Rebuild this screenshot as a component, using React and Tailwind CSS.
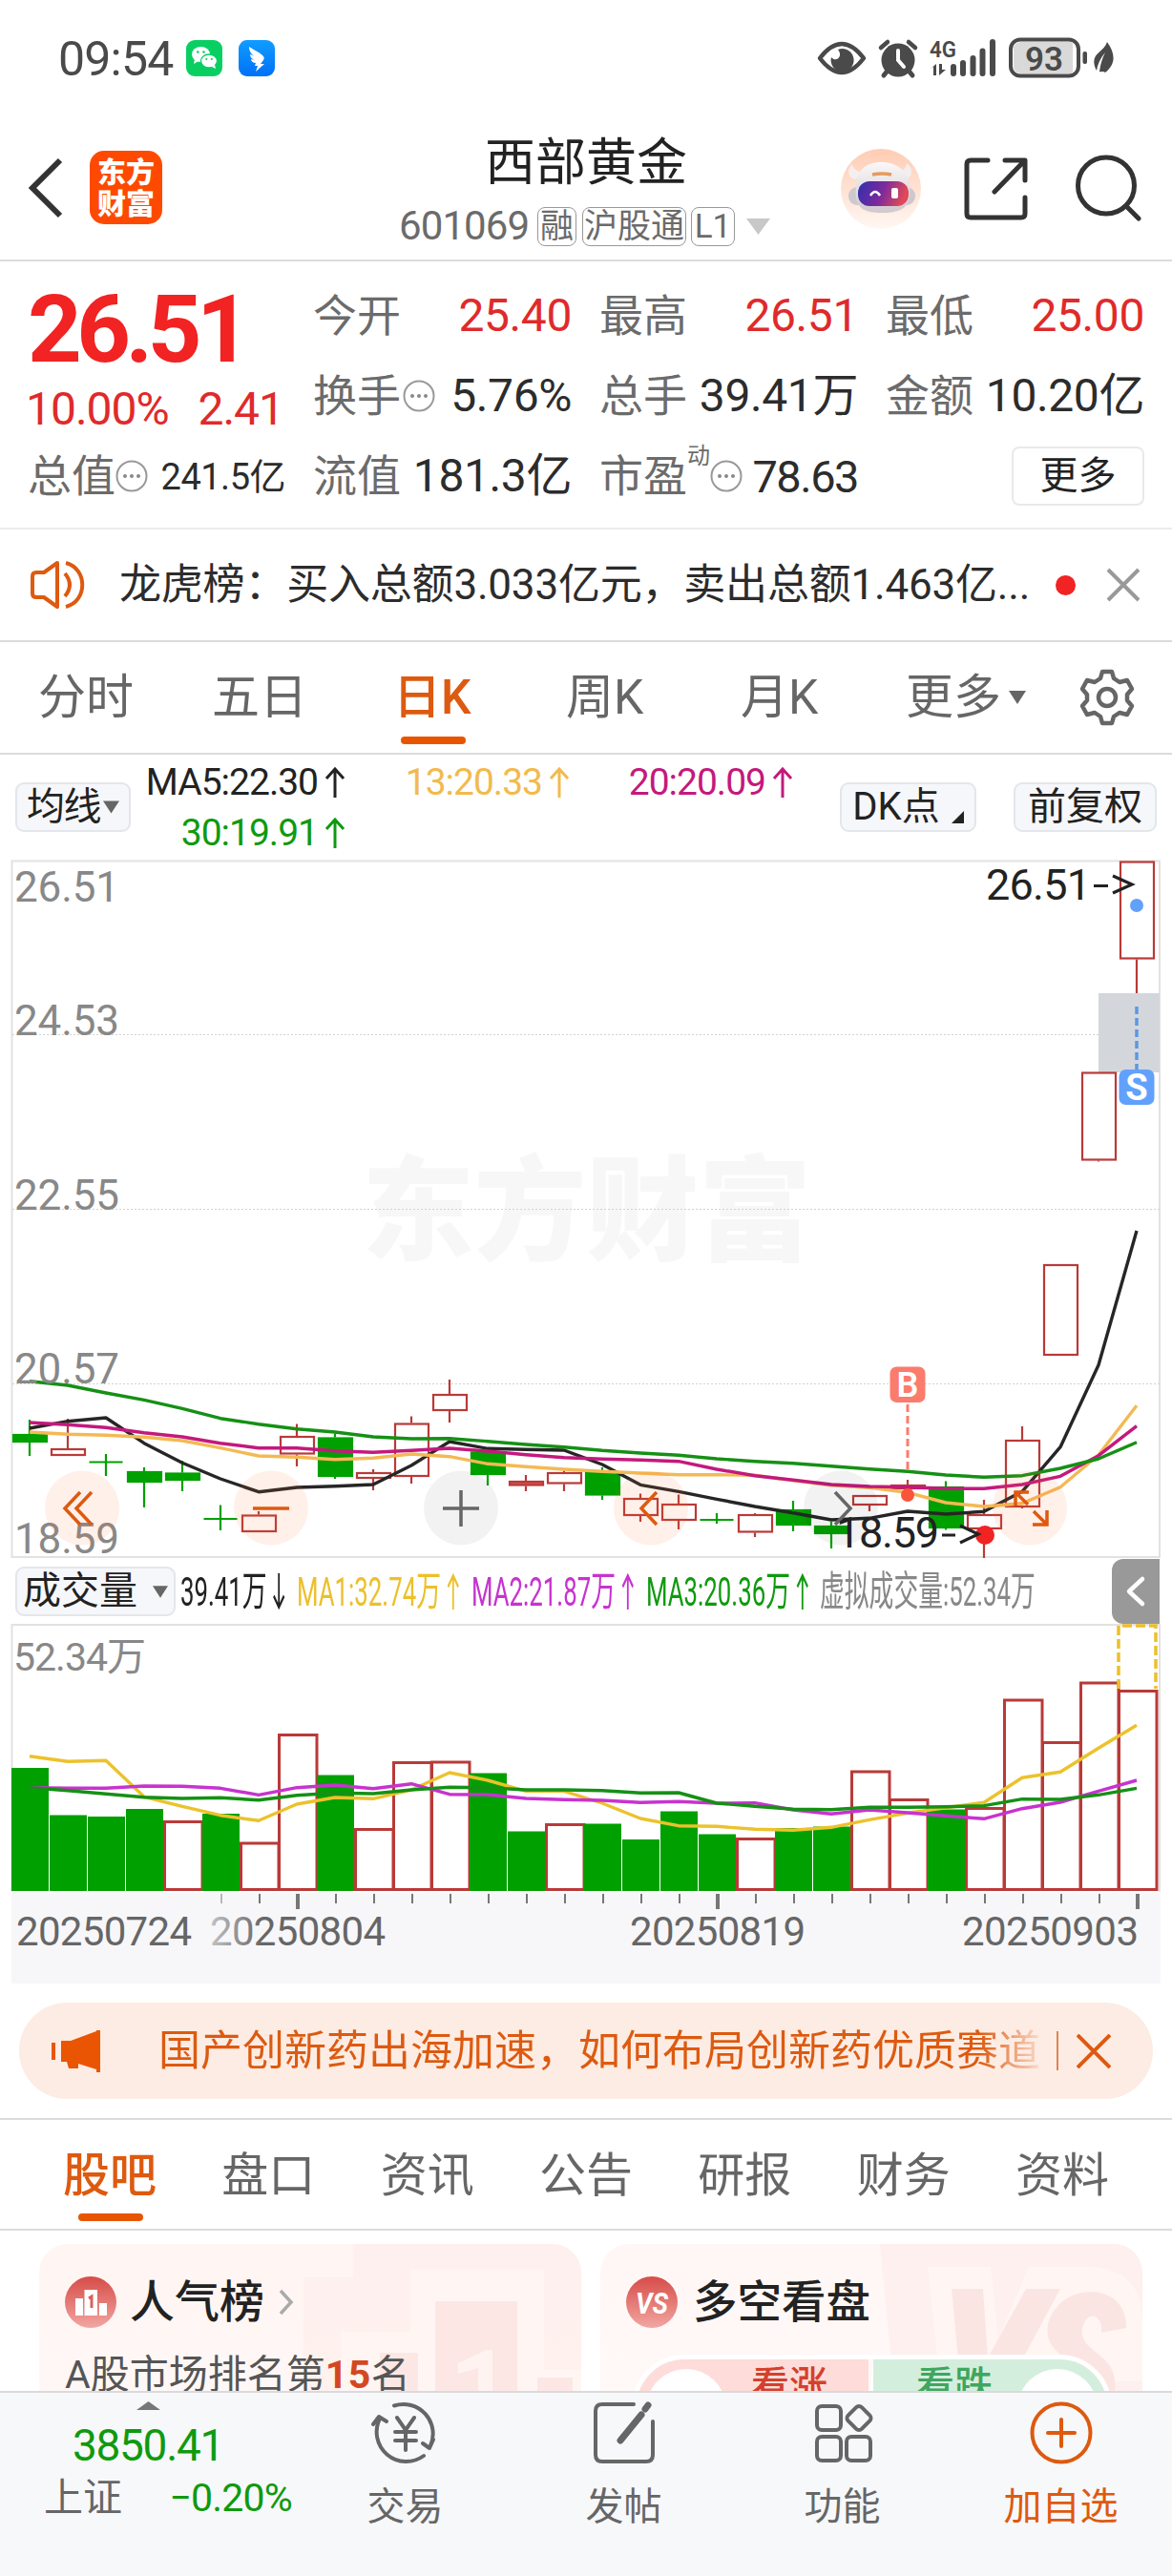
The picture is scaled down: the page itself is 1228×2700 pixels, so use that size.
import React from "react";
import clsx from "clsx";

const RED = "#b93a38";
const GREEN = "#00a000";

const STEP = 40;
const cx = (i) => 31 + i * STEP;
const toPoints = (ys) => ys.map((y, i) => `${cx(i)},${y}`).join(" ");

// [type, bodyTop, bodyBottom, wickTop, wickBottom]
const candles = [
  ["g", 1503, 1512, 1488, 1526],
  ["r", 1518, 1526, 1487, 1526],
  ["x", 1532.5, 1532.5, 1524, 1547],
  ["g", 1542, 1554, 1538, 1580],
  ["g", 1543.5, 1552, 1531, 1563],
  ["x", 1592, 1592, 1577.5, 1604],
  ["r", 1587.5, 1606, 1584, 1606],
  ["r", 1505, 1524.5, 1492.5, 1537],
  ["g", 1506.5, 1548, 1502.5, 1550],
  ["r", 1543, 1550, 1540, 1562],
  ["r", 1491.5, 1548, 1484.5, 1555],
  ["r", 1461, 1479, 1446, 1491],
  ["g", 1521.5, 1546, 1520, 1557],
  ["f", 1552, 1557.5, 1546, 1563],
  ["r", 1543, 1555.5, 1541.5, 1563],
  ["g", 1543, 1567.5, 1538, 1572],
  ["r", 1570, 1589, 1565.5, 1595],
  ["r", 1576, 1594, 1566.5, 1603],
  ["x", 1593, 1593, 1586, 1597],
  ["r", 1587, 1606.5, 1586, 1611],
  ["g", 1582, 1599, 1573, 1605],
  ["g", 1599, 1608, 1595, 1623],
  ["r", 1567, 1578, 1567, 1584],
  ["f", 1556, 1561, 1551, 1573],
  ["g", 1558, 1602, 1552.5, 1603.5],
  ["r", 1587, 1603, 1572, 1633],
  ["r", 1509, 1580, 1495, 1581],
  ["r", 1325, 1421, 1325, 1421],
  ["r", 1123.5, 1216.5, 1123.5, 1217.5],
  ["r", 902.5, 1005.5, 902.5, 1041],
];

const ma5 = [1497, 1489.7, 1486, 1512.7, 1533.3, 1550, 1563.7, 1559, 1557.7, 1556, 1536, 1511, 1518.3, 1519.3, 1520, 1535, 1556.3, 1563.3, 1571.3, 1579, 1585.7, 1593, 1591.3, 1584, 1587, 1584.3, 1563.3, 1516.7, 1430.7, 1290];
const ma13 = [1501, 1503.3, 1504.3, 1506.3, 1510, 1517.7, 1526, 1527.3, 1529.7, 1528.3, 1524, 1526.7, 1534.3, 1537.3, 1540, 1542.3, 1544, 1545.7, 1545.7, 1546.3, 1551.7, 1556.7, 1559.3, 1564.3, 1575, 1579, 1575.7, 1558.7, 1525, 1473.3];
const ma20 = [1491, 1493.3, 1496.3, 1501.7, 1506, 1512.7, 1517.7, 1517.7, 1520.7, 1522.3, 1520.3, 1518, 1521, 1524.7, 1527.7, 1529.3, 1530.3, 1531.7, 1540, 1546.7, 1551.3, 1556, 1558, 1558.7, 1560.3, 1560.3, 1556, 1547.3, 1525.7, 1494.7];
const ma30 = [1447.7, 1452, 1460, 1467.3, 1476.3, 1486.7, 1492.7, 1497.7, 1501, 1506, 1508, 1507.7, 1510.7, 1514, 1516.7, 1520.3, 1523, 1525.3, 1529, 1531.7, 1533.7, 1536.7, 1539.7, 1542.3, 1546, 1548.3, 1546.7, 1539, 1529, 1511.7];

const volumes = [
  ["g", 1853], ["g", 1902.5], ["g", 1904], ["g", 1896], ["r", 1908], ["g", 1901], ["r", 1930.5], ["r", 1817], ["g", 1860.5], ["r", 1916],
  ["r", 1846], ["r", 1845.5], ["g", 1858.5], ["g", 1919.5], ["r", 1911], ["g", 1911.5], ["g", 1928], ["g", 1898.5], ["g", 1922.5], ["r", 1926],
  ["g", 1916], ["g", 1914.5], ["r", 1855.5], ["r", 1885], ["g", 1896.5], ["r", 1894], ["r", 1780.5], ["r", 1825], ["r", 1762.5], ["r", 1771],
];
const vma1 = [1840.7, 1846.3, 1845.3, 1883.3, 1893.3, 1902.7, 1908.3, 1891, 1884, 1885.3, 1876, 1858, 1866, 1877.3, 1877.3, 1890, 1906, 1913.7, 1914.3, 1917.3, 1918.3, 1915.3, 1907.3, 1900.3, 1894.7, 1889.3, 1863.3, 1857.3, 1832.3, 1808.3];
const vma2 = [1873.7, 1874.3, 1874.3, 1872, 1872.3, 1874.3, 1881.3, 1873.7, 1871, 1874.7, 1869.7, 1880.7, 1881, 1885, 1886.3, 1887, 1889.3, 1888.3, 1890, 1889.7, 1897, 1901.3, 1897, 1900, 1903.3, 1906.3, 1895.7, 1889, 1877.3, 1866];
const vma3 = [1873.7, 1876.7, 1880.3, 1883.7, 1885, 1884.3, 1886.7, 1881.7, 1879.3, 1880, 1876, 1873.3, 1873.7, 1876, 1876, 1876.7, 1879.3, 1879, 1890, 1893.3, 1896.3, 1896.7, 1894.3, 1894.3, 1893.7, 1892.7, 1885.7, 1886, 1881.3, 1874.3];

const StatusBar = () => (
  <div className="flex h-[122px] items-start justify-between pl-[61px] pr-[61px] pt-[38px] text-[#4a4a4a]">
    <div className="flex h-[46px] items-center">
      <span className="w-[134px] pt-[2px] text-[50px] leading-none tracking-[-0.8px]">09:54</span>
      <svg className="h-[38px] w-[38px]" viewBox="0 0 38 38">
        <rect width="38" height="38" rx="9" fill="#09cf63" />
        <ellipse cx="15.500" cy="15" rx="9.500" ry="8" fill="#fff" />
        <path d="M9 20l-1 5 5-3z" fill="#fff" />
        <ellipse cx="24" cy="22" rx="8.500" ry="7" fill="#fff" stroke="#09cf63" strokeWidth="1.300" />
        <path d="M27 28l4 2-1-4z" fill="#fff" />
        <g fill="#09cf63">
          <circle cx="12.300" cy="12.500" r="1.300" />
          <circle cx="18.500" cy="12.500" r="1.300" />
          <circle cx="21.300" cy="20" r="1.100" />
          <circle cx="26.800" cy="20" r="1.100" />
        </g>
      </svg>
      <svg className="ml-[17px] h-[38px] w-[38px]" viewBox="0 0 38 38">
        <defs>
          <linearGradient id="ding" x1="0" y1="0" x2="0" y2="1">
            <stop offset="0" stopColor="#109dff" />
            <stop offset="1" stopColor="#0070f8" />
          </linearGradient>
        </defs>
        <rect width="38" height="38" rx="9" fill="url(#ding)" />
        <path d="M11 7c4 3 10 5 14 9 2 2 2 3 1 5l-3 4h4l-9 8 2-6h-3l1-3c-3 0-5-2-5-4l4 1c-3-1-5-3-5-6l5 2c-4-2-6-6-6-10z" fill="#fff" />
      </svg>
    </div>
    <svg className="h-[46px] w-[312px]" viewBox="855 38 312 46" fill="#4a4a4a">
      <path d="M859 61q23-30 46 0q-23 30-46 0z" fill="none" stroke="#4a4a4a" strokeWidth="4.500" strokeLinejoin="round" />
      <path d="M878 52a12 12 0 1 1-7 8c5 6 13-1 7-8z" />
      <circle cx="941" cy="63" r="17.500" />
      <path d="M923 50l7-6M959 50l-7-6" stroke="#4a4a4a" strokeWidth="4.500" strokeLinecap="round" />
      <path d="M930 74l-4 5M952 74l4 5" stroke="#4a4a4a" strokeWidth="5" strokeLinecap="round" />
      <path d="M941 53v10l6 7" fill="none" stroke="#fff" strokeWidth="4" strokeLinecap="round" />
      <text x="974" y="60" fontSize="24" fontWeight="600" textLength="28" lengthAdjust="spacingAndGlyphs">4G</text>
      <path d="M975 72l6-5v12h-3v-9zM984 67v12l7-6h-4v-6z" />
      <path d="M999 70v7M1009 66v11M1019.500 61v16M1029.500 53.500v23.500M1040 44v33" stroke="#4a4a4a" strokeWidth="6" strokeLinecap="round" />
      <rect x="1059" y="41.500" width="71" height="38" rx="10" fill="#fff" stroke="#4a4a4a" strokeWidth="4" />
      <path d="M1070 44h54v33h-54q-8 0-8-8v-17q0-8 8-8z" fill="#d9d9d9" />
      <text x="1074" y="73.500" fontSize="35" fontWeight="600" textLength="40" lengthAdjust="spacingAndGlyphs">93</text>
      <rect x="1134.500" y="54" width="4.500" height="13" rx="2" />
      <path d="M1160 44c10 14 8 24-2 32-3-2-4 0-6-1 1-8 3-14 6-20-5 6-8 12-9 19-9-18 7-18 11-30z" />
    </svg>
  </div>
);

const Tag = ({ children, className }) => (
  <span className={clsx("flex h-[41px] shrink-0 items-center justify-center whitespace-nowrap rounded-[8px] border-[1.5px] border-[#999] text-[35px] leading-none", className)}>
    {children}
  </span>
);

const Header = () => (
  <header className="relative flex h-[152px] items-start justify-between border-b-2 border-[#dcdcdc] pl-[28px] pr-[32px]">
    <div className="flex items-center pt-[36px]">
      <svg className="h-[68px] w-[40px]" viewBox="0 0 40 68" fill="none" stroke="#333" strokeWidth="6">
        <path d="M35 5L6 34l29 29" />
      </svg>
      <div className="ml-[26px] grid h-[77px] w-[76px] grid-cols-2 content-center justify-center justify-items-center rounded-[15px] bg-[#fe4a00] px-[8px] text-[30px] font-black leading-[33px] text-white">
        <span>东</span>
        <span>方</span>
        <span>财</span>
        <span>富</span>
      </div>
    </div>
    <div className="absolute left-[414px] top-[20px] flex w-[400px] flex-col items-center text-[#222]">
      <h1 className="text-[53px] leading-[58px]">西部黄金</h1>
      <div className="mt-[16px] flex items-center self-start whitespace-nowrap text-[#6b6b6b]">
        <span className="w-[149px] shrink-0 pl-[4px] text-[42px] leading-none tracking-[-0.9px]">601069</span>
        <Tag className="w-[41px]">融</Tag>
        <Tag className="ml-[6px] w-[109px]">沪股通</Tag>
        <Tag className="ml-[5px] w-[46px]">L1</Tag>
        <svg className="ml-[12px] h-[17px] w-[25px]" viewBox="0 0 25 17"><path d="M0 0h25L12.500 17z" fill="#c8c8c8" /></svg>
      </div>
    </div>
    <svg className="mt-[32px] h-[90px] w-[318px]" viewBox="878 154 318 90" fill="none">
      <defs>
        <linearGradient id="botBg" x1="0" y1="0" x2="0" y2="1">
          <stop offset="0" stopColor="#ffccb3" />
          <stop offset="1" stopColor="#fff7f3" />
        </linearGradient>
        <linearGradient id="botFace" x1="0" y1="0" x2="1" y2="0.200">
          <stop offset="0" stopColor="#2f2fae" />
          <stop offset="0.550" stopColor="#7e2a9c" />
          <stop offset="1" stopColor="#e04a58" />
        </linearGradient>
        <linearGradient id="botHead" x1="0" y1="0" x2="0" y2="1">
          <stop offset="0" stopColor="#fbf8f9" />
          <stop offset="1" stopColor="#cfc8cd" />
        </linearGradient>
      </defs>
      <circle cx="923" cy="198" r="42" fill="url(#botBg)" />
      <path d="M893 172c-5 4-6 14 3 16l9-7c-6-1-11-3-12-9zM950 171c7 5 7 15-2 17l-8-8c6 0 9-3 10-9z" fill="#f4eef0" />
      <rect x="889" y="196" width="70" height="19" rx="9" fill="#cdc8cd" />
      <path d="M897 196c0-17 10-26 26-26s29 8 30 26c2 20-6 27-29 27s-29-8-27-27z" fill="url(#botHead)" />
      <path d="M914 183q10-2 20 0" stroke="#e59b5d" strokeWidth="3.500" />
      <rect x="899" y="190" width="53" height="26" rx="12" fill="url(#botFace)" />
      <path d="M912 205q5-8 10 0" stroke="#fff" strokeWidth="2.500" />
      <rect x="934" y="197" width="7" height="11" rx="2" fill="#fff" />
      <g stroke="#333" strokeWidth="5" strokeLinecap="round" strokeLinejoin="round">
        <path d="M1035 168h-18q-4 0-4 4v52q0 4 4 4h53q4 0 4-4v-17M1053 168h21v21M1073 169l-31 32" />
        <circle cx="1159" cy="194.500" r="29.500" />
        <path d="M1180 216l13 13" />
      </g>
    </svg>
  </header>
);

const Dots = () => (
  <svg className="h-[34px] w-[34px] shrink-0" viewBox="0 0 34 34">
    <circle cx="17" cy="17" r="15.500" fill="none" stroke="#999" strokeWidth="2" />
    <g fill="#888">
      <circle cx="10" cy="17" r="2" />
      <circle cx="17" cy="17" r="2" />
      <circle cx="24" cy="17" r="2" />
    </g>
  </svg>
);

const Stat = ({ label, value, red, info }) => (
  <div className="flex items-center justify-between whitespace-nowrap">
    <span className="-ml-px flex items-center gap-[2px] text-[46px] leading-none text-[#6b6b6b]">
      {label}
      {info && <Dots />}
    </span>
    <span className={clsx("text-[48px] leading-none tracking-[-0.4px]", red ? "text-[#e02a2a]" : "text-[#2c2c2c]")}>{value}</span>
  </div>
);

const Quote = () => (
  <section className="flex h-[281px] gap-[30px] border-b-2 border-[#ececec] pl-[29px] pr-[29px] pt-[15px]">
    <div className="w-[270px]">
      <div className="flex h-[112px] items-center text-[99px] font-bold leading-none tracking-[-5.5px] text-[#f12323]">26.51</div>
      <div className="-ml-[2px] flex h-[56px] items-center justify-between pr-[2px] text-[48px] leading-none tracking-[-1px] text-[#e02a2a]">
        <span>10.00%</span>
        <span>2.41</span>
      </div>
      <div className="flex h-[84px] items-center whitespace-nowrap">
        <span className="text-[46px] leading-none text-[#6b6b6b]">总值</span>
        <Dots />
        <span className="ml-auto pt-[2px] text-[38px] leading-none tracking-[-0.5px] text-[#2c2c2c]">241.5亿</span>
      </div>
    </div>
    <div className="grid flex-1 auto-rows-[84px] grid-cols-3 gap-x-[30px]">
      <Stat label="今开" value="25.40" red />
      <Stat label="最高" value="26.51" red />
      <Stat label="最低" value="25.00" red />
      <Stat label="换手" value="5.76%" info />
      <Stat label="总手" value="39.41万" />
      <Stat label="金额" value="10.20亿" />
      <Stat label="流值" value="181.3亿" />
      <div className="flex items-center whitespace-nowrap">
        <span className="-ml-px text-[46px] leading-none text-[#6b6b6b]">市盈</span>
        <span className="-mt-[42px] text-[24px] leading-none text-[#6b6b6b]">动</span>
        <Dots />
        <span className="ml-auto text-[47px] leading-none tracking-[-1.5px] text-[#2c2c2c]">78.63</span>
      </div>
      <div className="flex items-center justify-end">
        <button className="h-[62px] w-[139px] rounded-[8px] border-2 border-[#e9e9ec] text-[40px] leading-none text-[#222]">更多</button>
      </div>
    </div>
  </section>
);

const Alert = () => (
  <section className="flex h-[118px] items-center border-b-2 border-[#dcdcdc] pl-[32px] pr-[33px]">
    <svg className="h-[52px] w-[60px]" viewBox="0 0 60 52" fill="none" stroke="#dd5a10" strokeWidth="4" strokeLinejoin="round">
      <path d="M28 3L14 13H6q-4 0-4 4v18q0 4 4 4h8l14 10zM36 14q10 12 0 24M37 3c23 6 23 40 0 46" />
    </svg>
    <p className="ml-[33px] w-[981px] whitespace-nowrap text-[44px] leading-none tracking-[-0.2px] text-[#2c2c2c]">龙虎榜：买入总额3.033亿元，卖出总额1.463亿...</p>
    <span className="h-[21px] w-[21px] rounded-full bg-[#f12323]" />
    <svg className="ml-auto h-[36px] w-[36px]" viewBox="0 0 36 36" stroke="#999" strokeWidth="4"><path d="M2 2l32 32M34 2L2 34" /></svg>
  </section>
);

const Caret = ({ className }) => (
  <svg className={className} viewBox="0 0 18 14"><path d="M0 0h18L9 14z" fill="#666" /></svg>
);

const PeriodTabs = () => (
  <nav className="relative flex h-[118px] items-center border-b-2 border-[#dcdcdc] pl-[40px] text-[50px] leading-none text-[#666]">
    <span className="w-[182px]">分时</span>
    <span className="w-[190px]">五日</span>
    <span className="relative w-[181px] font-medium text-[#dd5a10]">
      日K
      <i className="absolute -bottom-[24px] left-[8px] h-[8px] w-[68px] rounded-full bg-[#e85500]" />
    </span>
    <span className="w-[183px]">周K</span>
    <span className="w-[173px]">月K</span>
    <span>更多</span>
    <Caret className="ml-[8px] h-[14px] w-[18px]" />
    <svg className="ml-[56px] h-[60px] w-[58px]" viewBox="0 0 58 60" fill="none" stroke="#666" strokeWidth="4.500" strokeLinejoin="round">
      <path d="M24 3h10l2 7 6 4 8-2 5 9-5 6v6l5 6-5 9-8-2-6 4-2 7H24l-2-7-6-4-8 2-5-9 5-6v-6l-5-6 5-9 8 2 6-4z" />
      <circle cx="29" cy="30" r="9" />
    </svg>
  </nav>
);

const Chip = ({ children, className }) => (
  <button className={clsx("flex h-[52px] items-center justify-center whitespace-nowrap rounded-[9px] border-2 border-[#e3e6ea] bg-[#f6f7fa] text-[40px] leading-none text-[#222]", className)}>
    {children}
  </button>
);

const Arrow = ({ down, className }) => (
  <svg className={clsx("h-[32px] w-[22px] shrink-0", down && "rotate-180", className)} viewBox="0 0 22 32" preserveAspectRatio="none" fill="none" stroke="currentColor" strokeWidth="3">
    <path d="M11 32V2M2 12l9-10 9 10" />
  </svg>
);

const MaValue = ({ children, className }) => (
  <span className={clsx("flex h-[40px] items-center justify-end gap-[7px] text-[39px] leading-none tracking-[-1px]", className)}>
    {children}
    <Arrow />
  </span>
);

const MaLegend = () => (
  <section className="flex h-[112px] items-start pl-[16px] pr-[16px]">
    <Chip className="mt-[29px] w-[121px] gap-[3px] tracking-[-1.5px]">
      均线
      <Caret className="h-[14px] w-[17px]" />
    </Chip>
    <div className="ml-[17px] grid w-[680px] grid-cols-[208px_235px_234px] gap-y-[13px] pt-[9px]">
      <MaValue className="text-[#222]">MA5:22.30</MaValue>
      <MaValue className="text-[#f2ba4c]">13:20.33</MaValue>
      <MaValue className="text-[#c3197d]">20:20.09</MaValue>
      <MaValue className="text-[#0f9a0f]">30:19.91</MaValue>
    </div>
    <Chip className="ml-auto mt-[29px] w-[143px] gap-[12px]">
      DK点
      <svg className="mt-[20px] h-[13px] w-[13px]" viewBox="0 0 13 13"><path d="M13 0v13H0z" fill="#222" /></svg>
    </Chip>
    <Chip className="ml-[39px] mt-[29px] w-[150px]">前复权</Chip>
  </section>
);

const Candle = ({ data, x }) => {
  const [type, top, bottom, high, low] = data;
  if (type === "x") {
    return <path d={`M${x - 17.5} ${top}h35M${x} ${high}V${low}`} stroke={GREEN} strokeWidth="2.200" />;
  }
  const color = type === "g" ? GREEN : RED;
  return (
    <g stroke={color} strokeWidth="2.200">
      <path d={`M${x} ${high}V${top}M${x} ${bottom}V${low}`} />
      <rect x={x - 17} y={top + 1} width="35" height={bottom - top - 2} fill={type === "r" ? "none" : type === "f" ? "#d9534f" : GREEN} />
    </g>
  );
};

const KChart = () => (
  <svg className="h-[734px] w-[1228px]" viewBox="0 900 1228 734" fill="none">
    <text x="379" y="1312" fontSize="119" fontWeight="900" fill="#f7f7f7" textLength="471" lengthAdjust="spacingAndGlyphs">东方财富</text>
    <rect x="12.500" y="902.500" width="1202.500" height="729.500" stroke="#e2e2e2" strokeWidth="2" />
    <path d="M13 1084.500h1202M13 1267.500h1202M13 1450.500h1202" stroke="#d2d2d2" strokeWidth="1" strokeDasharray="2 2" />
    <rect x="1151" y="1041" width="64" height="83" fill="#d3d7dc" />

    {candles.map((c, i) => (
      <Candle key={i} data={c} x={cx(i)} />
    ))}

    <g strokeWidth="3.400" strokeLinejoin="round">
      <polyline points={toPoints(ma5)} stroke="#262626" />
      <polyline points={toPoints(ma13)} stroke="#f4b954" />
      <polyline points={toPoints(ma20)} stroke="#c3197d" />
      <polyline points={toPoints(ma30)} stroke="#159015" />
    </g>

    <g fontSize="44" fill="#888">
      <text x="15" y="945" textLength="110">26.51</text>
      <text x="15" y="1085" textLength="110">24.53</text>
      <text x="15" y="1268" textLength="110">22.55</text>
      <text x="15" y="1450" textLength="110">20.57</text>
      <text x="15" y="1628" textLength="110">18.59</text>
    </g>

    <g fill="#ff6e28" fillOpacity="0.100">
      <circle cx="86" cy="1580.500" r="39" />
      <circle cx="284" cy="1580.500" r="39" />
      <circle cx="682" cy="1580.500" r="39" />
      <circle cx="1079" cy="1580.500" r="39" />
    </g>
    <g fill="#000" fillOpacity="0.050">
      <circle cx="483" cy="1580.500" r="39" />
      <circle cx="881" cy="1580.500" r="39" />
    </g>
    <g stroke="#dd5a10" strokeWidth="3.500">
      <path d="M84 1564l-16 17 16 17M96 1564l-16 17 16 17" />
      <path d="M265 1581h38" />
      <path d="M688 1564l-16 17 16 17" />
      <path d="M1064 1578v-14h14M1065 1565l12 12M1097 1583v15h-15M1083 1584l13 13" />
    </g>
    <path d="M464 1581h38M483 1562v38M875 1564l16 17-16 17" stroke="#666" strokeWidth="3.500" />

    <path d="M951 1472v68" stroke="#fb7c6c" strokeWidth="3" strokeDasharray="8 4" />
    <rect x="932.500" y="1432.500" width="37" height="37.500" rx="7" fill="#fb7c6c" />
    <text x="951" y="1464" fontSize="36" fontWeight="600" textAnchor="middle" fill="#fff">B</text>
    <circle cx="951" cy="1567" r="7" fill="#f8553a" />
    <path d="M1191 1055v66" stroke="#5f97e0" strokeWidth="3.500" strokeDasharray="8 4" />
    <rect x="1172.500" y="1121" width="37" height="37" rx="7" fill="#62a1fb" />
    <text x="1191" y="1153" fontSize="38" fontWeight="700" textAnchor="middle" fill="#fff">S</text>
    <circle cx="1191" cy="949" r="7" fill="#62a1fb" />
    <circle cx="1032" cy="1609" r="10" fill="#f12323" />
    <g fontSize="45" fill="#222">
      <text x="1033" y="943" textLength="110">26.51</text>
      <text x="876" y="1622" textLength="108">18.59</text>
    </g>
    <path d="M1146 928.500h15M1166 918l20 9-20 9M987 1609h14M1006 1599l19 9-19 9" stroke="#222" strokeWidth="3.200" />
  </svg>
);

// narrow figures squeezed horizontally to fit on one line
const VolValue = ({ children, down, arrow = true, className }) => (
  <span className={clsx("flex w-max origin-left scale-x-[0.6] items-center whitespace-nowrap text-[43px] leading-none", className)}>
    {children}
    {arrow && <Arrow down={down} className="ml-[10px] h-[38px]!" />}
  </span>
);

const VolumeLegend = () => (
  <section className="flex h-[68px] items-center pl-[16px] pr-[13px]">
    <Chip className="w-[168px] shrink-0 gap-[16px]">
      成交量
      <Caret className="h-[13px] w-[16px]" />
    </Chip>
    <div className="ml-[5px] grid flex-1 grid-cols-[122px_183px_183px_182px_220px]">
      <VolValue className="text-[#222]" down>39.41万</VolValue>
      <VolValue className="text-[#ecc02b]">MA1:32.74万</VolValue>
      <VolValue className="text-[#c733cf]">MA2:21.87万</VolValue>
      <VolValue className="text-[#0f9a0f]">MA3:20.36万</VolValue>
      <VolValue className="text-[#888]" arrow={false}>虚拟成交量:52.34万</VolValue>
    </div>
    <button className="flex h-[68px] w-[50px] shrink-0 items-center justify-center rounded-l-[12px] bg-[#999]">
      <svg className="h-[34px] w-[22px]" viewBox="0 0 22 34" fill="none" stroke="#fff" strokeWidth="4.500" strokeLinecap="round" strokeLinejoin="round"><path d="M18 4L4 17l14 13" /></svg>
    </button>
  </section>
);

const VolumeChart = () => (
  <svg className="h-[382px] w-[1228px]" viewBox="0 1702 1228 382" fill="none">
    <defs>
      <linearGradient id="dateFade" gradientUnits="userSpaceOnUse" x1="215" y1="0" x2="275" y2="0">
        <stop offset="0" stopColor="#666" stopOpacity="0.300" />
        <stop offset="1" stopColor="#666" />
      </linearGradient>
    </defs>
    <path d="M12.500 1983V1703H1215V1983" stroke="#e2e2e2" strokeWidth="2" />
    <text x="14" y="1751" fontSize="41" fill="#888" textLength="139">52.34万</text>
    {volumes.map(([type, top], i) =>
      type === "g" ? (
        <rect key={i} x={12 + i * STEP} y={top} width="39" height={1982 - top} fill={GREEN} />
      ) : (
        <rect key={i} x={12.5 + i * STEP} y={top + 1.5} width="39.500" height={1980.5 - top - 1.5} stroke={RED} strokeWidth="3" />
      )
    )}
    <path d="M1172 1770V1704h39v66" stroke="#ecc02b" strokeWidth="3.500" strokeDasharray="10 4" />
    <g strokeWidth="3.400" strokeLinejoin="round">
      <polyline points={toPoints(vma1)} stroke="#ecc22c" />
      <polyline points={toPoints(vma2)} stroke="#c733cf" />
      <polyline points={toPoints(vma3)} stroke="#159015" />
    </g>
    <rect x="12" y="1984" width="1204" height="95" fill="#f7f7fa" />
    {volumes.map((v, i) => {
      if (i < 5) return null;
      const major = i === 7 || i === 18 || i === 29;
      return <path key={i} d={`M${cx(i) + 1} 1985v${major ? 16 : 10}`} stroke="#777" strokeOpacity={i === 5 ? 0.5 : 1} strokeWidth={major ? 4 : 2} />;
    })}
    <g fontSize="42" fill="#666">
      <text x="17" y="2039" textLength="184">20250724</text>
      <text x="220" y="2039" textLength="184" fill="url(#dateFade)">20250804</text>
      <text x="660" y="2039" textLength="184">20250819</text>
      <text x="1008" y="2039" textLength="185">20250903</text>
    </g>
  </svg>
);

const Banner = () => (
  <section className="mx-[20px] mt-[15px] flex h-[101px] items-center rounded-full bg-[#fdece3] pl-[34px] pr-[44px]">
    <svg className="h-[44px] w-[52px]" viewBox="0 0 52 44" fill="#ea5504">
      <path d="M0 13h4v18H0zM10 11h10L47 1V0h4v44h-4v-3l-19-6v5H18l-2-7h-6z" />
    </svg>
    <p className="ml-[60px] w-[925px] whitespace-nowrap bg-linear-to-r from-[#dd5a10] from-93% to-[#dd5a10]/10 bg-clip-text text-[44px] leading-[56px] text-transparent">
      国产创新药出海加速，如何布局创新药优质赛道
    </p>
    <span className="ml-auto h-[41px] w-[2px] bg-[#e08450]" />
    <svg className="ml-[19px] h-[36px] w-[36px]" viewBox="0 0 36 36" stroke="#dd5a10" strokeWidth="4"><path d="M1 1l34 34M35 1L1 35" /></svg>
  </section>
);

const sections = ["股吧", "盘口", "资讯", "公告", "研报", "财务", "资料"];

const SectionTabs = () => (
  <nav className="mt-[20px] flex h-[118px] items-center justify-between border-y-2 border-[#dcdcdc] px-[66px] pt-[3px] text-[49px] leading-none text-[#666]">
    {sections.map((name, i) => (
      <span key={name} className={clsx("relative", i === 0 && "font-medium text-[#dd5a10]")}>
        {name}
        {i === 0 && <i className="absolute -bottom-[23px] left-[16px] h-[8px] w-[68px] rounded-full bg-[#e85500]" />}
      </span>
    ))}
  </nav>
);

const BadgeIcon = ({ children }) => (
  <svg className="h-[54px] w-[54px]" viewBox="0 0 54 54">
    <defs>
      <linearGradient id="badge" x1="0" y1="0" x2="0" y2="1">
        <stop offset="0" stopColor="#d64c48" />
        <stop offset="1" stopColor="#f2a6a2" />
      </linearGradient>
    </defs>
    <circle cx="27" cy="27" r="27" fill="url(#badge)" />
    {children}
  </svg>
);

const Cards = () => (
  <section className="flex h-[168px] gap-[20px] overflow-hidden pl-[41px] pr-[31px] pt-[14px]">
    <div className="relative h-[300px] w-[568px] overflow-hidden rounded-[30px] bg-linear-to-b from-[#fff5f3] to-[#fffaf8]">
      <svg className="absolute inset-0 h-[156px] w-[568px]" viewBox="41 2352 568 156">
        <path d="M318 2507V2387h52v-35h239v155z" fill="#fdeeeb" fillOpacity="0.700" />
        <path d="M357 2507v-63h73v-65h140v105h39v23z" fill="#fff6f4" />
        <path d="M456 2412h86v95h-86zM398 2466h40v41h-40zM563 2492h37v15h-37z" fill="#fce7e4" />
        <path d="M480 2477l30-14h6v44h-15v-25l-21 6z" fill="#fff3f1" />
      </svg>
      <div className="relative px-[27px] pt-[31px]">
        <div className="flex items-center">
          <BadgeIcon>
            <path d="M11 23h8v18h-8zM36 28h8v13h-8z" fill="#fff" />
            <path d="M20.500 14h13.500v27H20.500z" fill="#fff" />
            <path d="M25 23l3-2v12" fill="none" stroke="#d9605c" strokeWidth="3" />
          </BadgeIcon>
          <h2 className="ml-[14px] text-[47px] font-medium leading-[60px] text-[#222]">人气榜</h2>
          <svg className="ml-[15px] h-[28px] w-[16px]" viewBox="0 0 16 28" fill="none" stroke="#aaa" strokeWidth="3.500"><path d="M2 2l11 12L2 26" /></svg>
        </div>
        <p className="mt-[21px] flex items-center whitespace-nowrap text-[41px] leading-[50px] text-[#555]">
          A股市场排名第<b className="tracking-[0.5px] text-[#d4481f]">15</b>名
        </p>
      </div>
    </div>
    <div className="relative h-[300px] w-[568px] overflow-hidden rounded-[30px] bg-linear-to-b from-[#fff7f5] to-[#fffaf8]">
      <svg className="absolute inset-0 h-[156px] w-[568px]" viewBox="629 2352 568 156">
        <path d="M922 2352h275v155H937z" fill="#fdf0ee" />
        <path d="M972 2376h66l8 75 32-75h60q60 0 59 60v60H985z" fill="#fff6f4" />
        <g fill="#fbe5e3">
          <path d="M997 2399h33l5 72 40-72h36l-58 108h-46z" />
          <path d="M1180 2440c2-50-70-50-82-4-6 38 40 34 42 71h28c6-42-38-40-34-66 4-20 22-16 20 4z" />
        </g>
      </svg>
      <div className="relative px-[27px] pt-[31px]">
        <div className="flex items-center">
          <BadgeIcon>
            <text x="27" y="39" fontSize="31" fontWeight="700" fontStyle="italic" textAnchor="middle" fill="#fff" textLength="34" lengthAdjust="spacingAndGlyphs">VS</text>
          </BadgeIcon>
          <h2 className="ml-[16px] text-[46.5px] font-medium leading-[60px] text-[#222]">多空看盘</h2>
        </div>
      </div>
      <div className="absolute left-[33px] top-[116px] flex h-[110px] w-[503px] items-start overflow-hidden rounded-full border-[5px] border-white text-[40px] font-medium">
        <div className="relative flex h-full flex-1 justify-end bg-[#fddcd9] pr-[43px] text-[#d4402c]">
          <i className="absolute left-[10px] top-[10px] h-[84px] w-[84px] rounded-full bg-white" />
          <span className="pt-[4px] leading-[48px]">看涨</span>
        </div>
        <div className="h-full w-[5px] -skew-x-6 bg-white" />
        <div className="relative flex h-full flex-1 bg-[#d4eedd] pl-[45px] text-[#3fa65f]">
          <i className="absolute right-[10px] top-[10px] h-[84px] w-[84px] rounded-full bg-white" />
          <span className="pt-[4px] leading-[48px]">看跌</span>
        </div>
      </div>
    </div>
  </section>
);

const NavItem = ({ label, active, children }) => (
  <button className={clsx("flex w-[229px] flex-col items-center pt-[9px] text-[40px] leading-none", active ? "text-[#dd5a10]" : "text-[#666]")}>
    <svg className="h-[66px] w-[76px]" viewBox="0 0 76 66" fill="none" stroke="currentColor" strokeWidth="4" strokeLinecap="round" strokeLinejoin="round">
      {children}
    </svg>
    <span className="mt-[25px]">{label}</span>
  </button>
);

const BottomBar = () => (
  <footer className="flex h-[194px] border-t-2 border-[#d9dadd] bg-[#f7f8fa]">
    <div className="flex w-[310px] shrink-0 flex-col items-center">
      <svg className="mt-[9px] h-[9px] w-[25px]" viewBox="0 0 25 9"><path d="M12.500 0L25 9H0z" fill="#777" /></svg>
      <span className="mt-[14px] h-[46px] text-[46px] leading-none tracking-[-1.3px] text-[#0f9a0f]">3850.41</span>
      <div className="mt-[12px] flex w-full items-center justify-between pl-[46px] pr-[4px] text-[41px] leading-none">
        <span className="text-[#666]">上证</span>
        <span className="tracking-[-0.8px] text-[#0f9a0f]">−0.20%</span>
      </div>
    </div>
    <NavItem label="交易">
      <path d="M26 4.500a31 31 0 0 1 38 42M67 40l-4 9-7-5M57 57a31 31 0 0 1-46-39M4 24l6-8 8 5" />
      <path d="M29 17l9 13 9-13M38 30v21M27 32h22M27 41h22" />
    </NavItem>
    <NavItem label="发帖">
      <path d="M48 3H15q-7 0-7 7v46q0 7 7 7h46q7 0 7-7V21" />
      <path d="M63 4L60 8M56 14L34 41" strokeWidth="7" />
    </NavItem>
    <NavItem label="功能">
      <rect x="11" y="5" width="25" height="25" rx="5" />
      <rect x="11" y="37" width="25" height="25" rx="5" />
      <rect x="42" y="37" width="25" height="25" rx="5" />
      <rect x="45" y="7.500" width="20" height="20" rx="4" transform="rotate(45 55 17.500)" />
    </NavItem>
    <NavItem label="加自选" active>
      <circle cx="38" cy="33" r="30.500" />
      <path d="M24 33h28M38 19v28" />
    </NavItem>
  </footer>
);

export default function App() {
  return (
    <div className="h-[2700px] w-[1228px] overflow-hidden bg-white [font-family:Roboto,'Noto_Sans_CJK_SC',sans-serif]">
      <StatusBar />
      <Header />
      <Quote />
      <Alert />
      <PeriodTabs />
      <MaLegend />
      <div className="-mt-[3px] flex flex-col">
        <KChart />
        <VolumeLegend />
        <VolumeChart />
      </div>
      <Banner />
      <SectionTabs />
      <Cards />
      <BottomBar />
    </div>
  );
}
